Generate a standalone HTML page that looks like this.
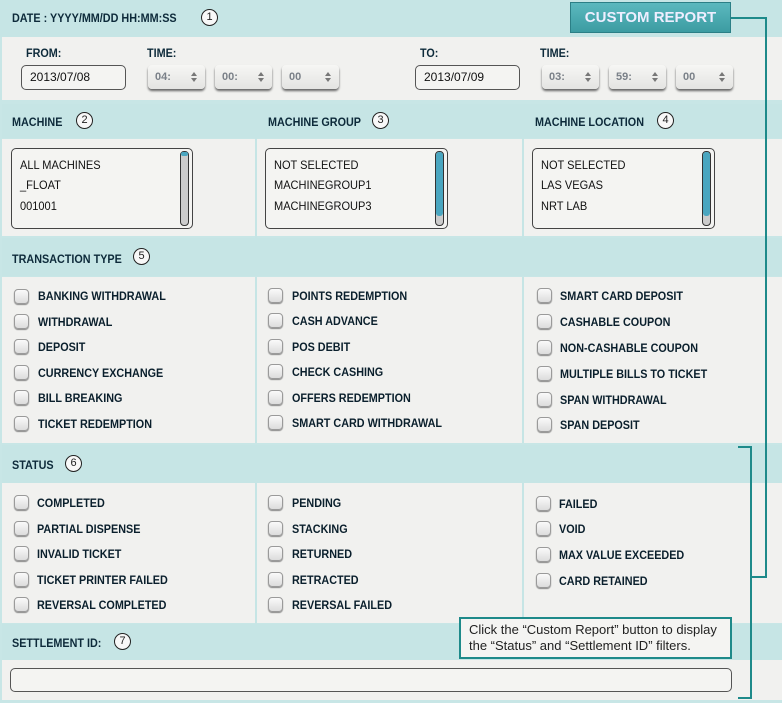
<!DOCTYPE html>
<html><head><meta charset="utf-8"><style>
*{margin:0;padding:0;box-sizing:border-box}
body{width:782px;height:703px;position:relative;background:#c8e6e6;font-family:"Liberation Sans",sans-serif;overflow:hidden}
.a{position:absolute}
.hd{position:absolute;background:#c6e5e5}
.bd{position:absolute;background:#f1f1ef}
.t{position:absolute;font-weight:bold;font-size:12px;color:#0a1f2c;white-space:nowrap;transform:scaleX(0.9);transform-origin:left}
.h{position:absolute;font-weight:bold;font-size:12px;color:#0d2a3a;white-space:nowrap;transform:scaleX(0.9);transform-origin:left}
.n{position:absolute;width:17px;height:17px;border:1px solid #222;border-radius:50%;background:#f8f8f8;font-size:11px;text-align:center;line-height:15px;color:#222}
.cb{position:absolute;width:15px;height:15px;border:1px solid #9a9a9a;border-radius:4px;background:linear-gradient(#fafafa,#dcdcdc);box-shadow:0 1px 1px #888}
.inp{position:absolute;border:1px solid #555;border-radius:5px;background:#f4f4f2;font-size:12px;color:#111;padding-left:8px;line-height:22px}
.sp{position:absolute;width:57px;height:24px;border-radius:4px;background:linear-gradient(#f6f6f4,#e4e4e2);box-shadow:0 2px 2px #666;font-size:11px;font-weight:bold;color:#7a8088;padding-left:7px;line-height:24px}
.sp:after{content:"";position:absolute;right:8px;top:7px;border:3.5px solid transparent;border-bottom:4px solid #777;border-top:0}
.sp:before{content:"";position:absolute;right:8px;top:13px;border:3.5px solid transparent;border-top:4px solid #777;border-bottom:0}
.lb{position:absolute;border:1px solid #444;border-radius:5px;background:#f4f4f2}
.lb div{position:absolute;left:8px;font-size:12px;color:#111;transform:scaleX(0.92);transform-origin:left;white-space:nowrap}
.sb{position:absolute;right:3px;top:2px;width:9px;bottom:2px;border:1px solid #333;border-radius:4px;background:#ccc}
.sb i{position:absolute;left:0;right:0;top:0;border-radius:3px;background:#4aa6c0}
.vl{position:absolute;width:2px;background:#c6e5e5}
</style></head><body>
<div class="hd" style="left:0;top:0;width:782px;height:37px"></div>
<div class="h" style="left:12px;top:11px">DATE : YYYY/MM/DD HH:MM:SS</div>
<div class="n" style="left:201px;top:9px">1</div>
<div class="a" style="left:570px;top:2px;width:161px;height:31px;background:linear-gradient(#5bb8be,#3c9ca2);border:1px solid #2b7f86;color:#eef;font-weight:bold;font-size:15px;text-align:center;line-height:30px">CUSTOM REPORT</div>
<div class="bd" style="left:2px;top:37px;width:780px;height:63px"></div>
<div class="h" style="left:26px;top:46px">FROM:</div>
<div class="h" style="left:147px;top:46px">TIME:</div>
<div class="h" style="left:420px;top:46px">TO:</div>
<div class="h" style="left:540px;top:46px">TIME:</div>
<div class="inp" style="left:21px;top:65px;width:105px;height:25px">2013/07/08</div>
<div class="sp" style="left:148px;top:65px">04:</div>
<div class="sp" style="left:215px;top:65px">00:</div>
<div class="sp" style="left:282px;top:65px">00</div>
<div class="inp" style="left:415px;top:65px;width:105px;height:25px">2013/07/09</div>
<div class="sp" style="left:542px;top:65px">03:</div>
<div class="sp" style="left:609px;top:65px">59:</div>
<div class="sp" style="left:676px;top:65px">00</div>
<div class="hd" style="left:2px;top:104px;width:780px;height:34px"></div>
<div class="h" style="left:12px;top:115px">MACHINE</div><div class="n" style="left:76px;top:112px">2</div>
<div class="h" style="left:268px;top:115px">MACHINE GROUP</div><div class="n" style="left:372px;top:112px">3</div>
<div class="h" style="left:535px;top:115px">MACHINE LOCATION</div><div class="n" style="left:657px;top:112px">4</div>
<div class="bd" style="left:2px;top:139px;width:780px;height:97px"></div>
<div class="lb" style="left:11px;top:148px;width:182px;height:81px"><div style="top:9px">ALL MACHINES</div><div style="top:29px">_FLOAT</div><div style="top:50px">001001</div><span class="sb"><i style="height:4px"></i></span></div>
<div class="lb" style="left:265px;top:148px;width:183px;height:81px"><div style="top:9px">NOT SELECTED</div><div style="top:29px">MACHINEGROUP1</div><div style="top:50px">MACHINEGROUP3</div><span class="sb"><i style="height:64px"></i></span></div>
<div class="lb" style="left:532px;top:148px;width:183px;height:81px"><div style="top:9px">NOT SELECTED</div><div style="top:29px">LAS VEGAS</div><div style="top:50px">NRT LAB</div><span class="sb"><i style="height:64px"></i></span></div>
<div class="hd" style="left:2px;top:238px;width:780px;height:38px"></div>
<div class="h" style="left:12px;top:252px">TRANSACTION TYPE</div><div class="n" style="left:133px;top:248px">5</div>
<div class="bd" style="left:2px;top:277px;width:780px;height:166px"></div>
<div class="hd" style="left:2px;top:445px;width:780px;height:38px"></div>
<div class="h" style="left:12px;top:458px">STATUS</div><div class="n" style="left:65px;top:455px">6</div>
<div class="bd" style="left:2px;top:483px;width:780px;height:140px"></div>
<div class="hd" style="left:2px;top:624px;width:780px;height:36px"></div>
<div class="h" style="left:12px;top:636px">SETTLEMENT ID:</div><div class="n" style="left:114px;top:633px">7</div>
<div class="bd" style="left:2px;top:660px;width:780px;height:40px"></div>
<div class="inp" style="left:10px;top:668px;width:722px;height:24px"></div>
<div class="vl" style="left:255px;top:104px;height:134px"></div>
<div class="vl" style="left:522px;top:104px;height:134px"></div>
<div class="vl" style="left:255px;top:277px;height:166px"></div>
<div class="vl" style="left:522px;top:277px;height:166px"></div>
<div class="vl" style="left:255px;top:483px;height:141px"></div>
<div class="vl" style="left:522px;top:483px;height:141px"></div>

<div class="cb" style="left:14px;top:289px"></div><div class="t" style="left:38px;top:289px">BANKING WITHDRAWAL</div>
<div class="cb" style="left:14px;top:314px"></div><div class="t" style="left:38px;top:315px">WITHDRAWAL</div>
<div class="cb" style="left:14px;top:339px"></div><div class="t" style="left:38px;top:340px">DEPOSIT</div>
<div class="cb" style="left:14px;top:365px"></div><div class="t" style="left:38px;top:366px">CURRENCY EXCHANGE</div>
<div class="cb" style="left:14px;top:390px"></div><div class="t" style="left:38px;top:391px">BILL BREAKING</div>
<div class="cb" style="left:14px;top:416px"></div><div class="t" style="left:38px;top:417px">TICKET REDEMPTION</div>

<div class="cb" style="left:268px;top:288px"></div><div class="t" style="left:292px;top:289px">POINTS REDEMPTION</div>
<div class="cb" style="left:268px;top:313px"></div><div class="t" style="left:292px;top:314px">CASH ADVANCE</div>
<div class="cb" style="left:268px;top:339px"></div><div class="t" style="left:292px;top:340px">POS DEBIT</div>
<div class="cb" style="left:268px;top:364px"></div><div class="t" style="left:292px;top:365px">CHECK CASHING</div>
<div class="cb" style="left:268px;top:390px"></div><div class="t" style="left:292px;top:391px">OFFERS REDEMPTION</div>
<div class="cb" style="left:268px;top:415px"></div><div class="t" style="left:292px;top:416px">SMART CARD WITHDRAWAL</div>

<div class="cb" style="left:537px;top:288px"></div><div class="t" style="left:560px;top:289px">SMART CARD DEPOSIT</div>
<div class="cb" style="left:537px;top:314px"></div><div class="t" style="left:560px;top:315px">CASHABLE COUPON</div>
<div class="cb" style="left:537px;top:340px"></div><div class="t" style="left:560px;top:341px">NON-CASHABLE COUPON</div>
<div class="cb" style="left:537px;top:366px"></div><div class="t" style="left:560px;top:367px">MULTIPLE BILLS TO TICKET</div>
<div class="cb" style="left:537px;top:392px"></div><div class="t" style="left:560px;top:393px">SPAN WITHDRAWAL</div>
<div class="cb" style="left:537px;top:417px"></div><div class="t" style="left:560px;top:418px">SPAN DEPOSIT</div>

<div class="cb" style="left:14px;top:495px"></div><div class="t" style="left:37px;top:496px">COMPLETED</div>
<div class="cb" style="left:14px;top:521px"></div><div class="t" style="left:37px;top:522px">PARTIAL DISPENSE</div>
<div class="cb" style="left:14px;top:546px"></div><div class="t" style="left:37px;top:547px">INVALID TICKET</div>
<div class="cb" style="left:14px;top:572px"></div><div class="t" style="left:37px;top:573px">TICKET PRINTER FAILED</div>
<div class="cb" style="left:14px;top:597px"></div><div class="t" style="left:37px;top:598px">REVERSAL COMPLETED</div>

<div class="cb" style="left:268px;top:495px"></div><div class="t" style="left:292px;top:496px">PENDING</div>
<div class="cb" style="left:268px;top:521px"></div><div class="t" style="left:292px;top:522px">STACKING</div>
<div class="cb" style="left:268px;top:546px"></div><div class="t" style="left:292px;top:547px">RETURNED</div>
<div class="cb" style="left:268px;top:572px"></div><div class="t" style="left:292px;top:573px">RETRACTED</div>
<div class="cb" style="left:268px;top:597px"></div><div class="t" style="left:292px;top:598px">REVERSAL FAILED</div>

<div class="cb" style="left:536px;top:496px"></div><div class="t" style="left:559px;top:497px">FAILED</div>
<div class="cb" style="left:536px;top:521px"></div><div class="t" style="left:559px;top:522px">VOID</div>
<div class="cb" style="left:536px;top:547px"></div><div class="t" style="left:559px;top:548px">MAX VALUE EXCEEDED</div>
<div class="cb" style="left:536px;top:573px"></div><div class="t" style="left:559px;top:574px">CARD RETAINED</div>

<div class="a" style="left:731px;top:17px;width:35px;height:2px;background:#1e8a8a"></div>
<div class="a" style="left:765px;top:17px;width:2px;height:561px;background:#1e8a8a"></div>
<div class="a" style="left:751px;top:576px;width:16px;height:2px;background:#1e8a8a"></div>
<div class="a" style="left:750px;top:446px;width:2px;height:253px;background:#1e8a8a"></div>
<div class="a" style="left:738px;top:446px;width:14px;height:2px;background:#1e8a8a"></div>
<div class="a" style="left:738px;top:697px;width:14px;height:2px;background:#1e8a8a"></div>
<div class="a" style="left:459px;top:617px;width:273px;height:42px;border:2px solid #1e8a8a;background:#f4f4f2;font-size:13px;color:#222;padding:3px 0 0 8px;line-height:16px;white-space:nowrap">Click the “Custom Report” button to display<br>the “Status” and “Settlement ID” filters.</div>
</body></html>
